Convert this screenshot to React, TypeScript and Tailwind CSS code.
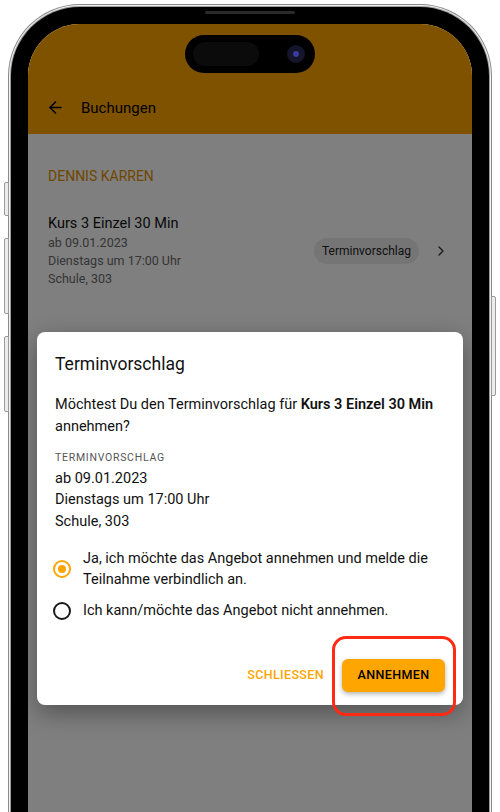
import { ArrowLeft, ChevronRight } from 'lucide-react'

const details = ['ab 09.01.2023', 'Dienstags um 17:00 Uhr', 'Schule, 303']

function Radio({ checked }: { checked?: boolean }) {
  return (
    <span
      className={
        'flex h-[18px] w-[18px] shrink-0 items-center justify-center rounded-full border-2 ' +
        (checked ? 'border-[#ffa500]' : 'border-[#1a1a1a]')
      }
    >
      {checked && <span className="h-[8px] w-[8px] rounded-full bg-[#ffa500]" />}
    </span>
  )
}

export default function App() {
  return (
    <div className="relative h-[812px] w-[500px] overflow-hidden bg-white" style={{ fontFamily: 'Roboto, "Liberation Sans", sans-serif' }}>
      {/* side buttons */}
      <div className="absolute left-[4px] top-[182px] h-[34px] w-[5px] rounded-l-[2px] border border-[#9a9a9a] bg-[#ececec]" />
      <div className="absolute left-[4px] top-[238px] h-[76px] w-[5px] rounded-l-[2px] border border-[#9a9a9a] bg-[#ececec]" />
      <div className="absolute left-[4px] top-[336px] h-[76px] w-[5px] rounded-l-[2px] border border-[#9a9a9a] bg-[#ececec]" />
      <div className="absolute right-[4px] top-[296px] h-[100px] w-[5px] rounded-r-[2px] border border-[#9a9a9a] bg-[#ececec]" />

      {/* phone frame */}
      <div className="ml-[8px] mt-[4px] h-[900px] w-[484px] rounded-[72px] bg-[#8a8a8a] p-px">
        <div className="h-full rounded-[71px] bg-[#f2f2f2] p-px">
          <div className="h-full rounded-[70px] bg-[#9c9c9c] p-px">
            <div className="relative h-full rounded-[69px] bg-black p-[17px]">
              <div className="absolute left-1/2 top-[4px] h-[3px] w-[90px] -translate-x-1/2 rounded-full bg-[#2a2a2a]" />

              {/* screen */}
              <div className="relative h-full overflow-hidden rounded-[52px] bg-white">
                <div className="flex h-[110px] items-end gap-[16px] bg-[#ffa500] px-[18px] pb-[16px]">
                  <ArrowLeft size={19} strokeWidth={2} className="mb-[1px] text-black" />
                  <span className="text-[15px] leading-[20px] text-black">Buchungen</span>
                </div>

                <div className="px-[20px] pt-[32px]">
                  <p className="text-[14px] leading-[20px] uppercase text-[#e08e00]">Dennis Karren</p>
                  <div className="mt-[28px] flex items-center">
                    <div className="flex-1">
                      <p className="text-[14.5px] leading-[20px] text-[#111]">Kurs 3 Einzel 30 Min</p>
                      <div className="mt-[0px] text-[12.5px] leading-[18px] text-[#6a6a6a]">
                        {details.map((d) => (
                          <p key={d}>{d}</p>
                        ))}
                      </div>
                    </div>
                    <span className="rounded-full bg-[#ebebeb] px-[8px] py-[4px] text-[12px] text-[#222]">Terminvorschlag</span>
                    <ChevronRight size={16} strokeWidth={2} className="ml-[14px] mr-[3px] text-[#333]" />
                  </div>
                </div>

                {/* scrim */}
                <div className="absolute inset-0 bg-black/50" />
              </div>

              {/* dynamic island */}
              <div className="absolute left-1/2 top-[28px] flex h-[38px] w-[130px] -translate-x-1/2 items-center justify-between rounded-full bg-black pl-[8px] pr-[10px]">
                <div className="h-[24px] w-[66px] rounded-full bg-[#0b0b0b]" />
                <div className="flex h-[18px] w-[18px] items-center justify-center rounded-full bg-[#14142a]">
                  <div className="h-[6px] w-[6px] rounded-full bg-[#3a3a9a]" />
                </div>
              </div>
            </div>
          </div>
        </div>
      </div>

      {/* dialog */}
      <div className="absolute left-[37px] top-[332px] w-[426px] rounded-[8px] bg-white px-[18px] pb-[13px] pt-[20px] shadow-[0_8px_24px_rgba(0,0,0,0.35)]">
        <h2 className="text-[17.5px] leading-[24px] text-[#111]">Terminvorschlag</h2>
        <p className="mt-[18px] text-[14.5px] leading-[22px] text-[#111]">
          Möchtest Du den Terminvorschlag für <b className="font-semibold">Kurs 3 Einzel 30 Min</b> annehmen?
        </p>
        <p className="mt-[12px] text-[10.5px] uppercase tracking-[0.07em] text-[#555]">Terminvorschlag</p>
        <div className="mt-[2px] text-[14.5px] leading-[21.5px] text-[#111]">
          {details.map((d) => (
            <p key={d}>{d}</p>
          ))}
        </div>

        <div className="mt-[16px] flex flex-col gap-[10px] text-[14.5px] leading-[21px] text-[#111]">
          <label className="-ml-[2px] flex items-center gap-[12px]">
            <Radio checked />
            <span>Ja, ich möchte das Angebot annehmen und melde die Teilnahme verbindlich an.</span>
          </label>
          <label className="-ml-[2px] flex items-center gap-[12px]">
            <Radio />
            <span>Ich kann/möchte das Angebot nicht annehmen.</span>
          </label>
        </div>

        <div className="mt-[38px] flex items-center justify-end gap-[18px]">
          <button className="text-[12.5px] font-medium tracking-[0.03em] text-[#ffa500]">SCHLIESSEN</button>
          <button className="h-[33px] w-[103px] rounded-[6px] bg-[#ffa500] text-[12.5px] font-medium tracking-[0.03em] text-black shadow-[0_2px_5px_rgba(0,0,0,0.3)]">
            ANNEHMEN
          </button>
        </div>
      </div>

      {/* highlight */}
      <div className="absolute left-[332px] top-[636px] h-[80px] w-[124px] rounded-[14px] border-[3px] border-[#ff2a14]" />
    </div>
  )
}
